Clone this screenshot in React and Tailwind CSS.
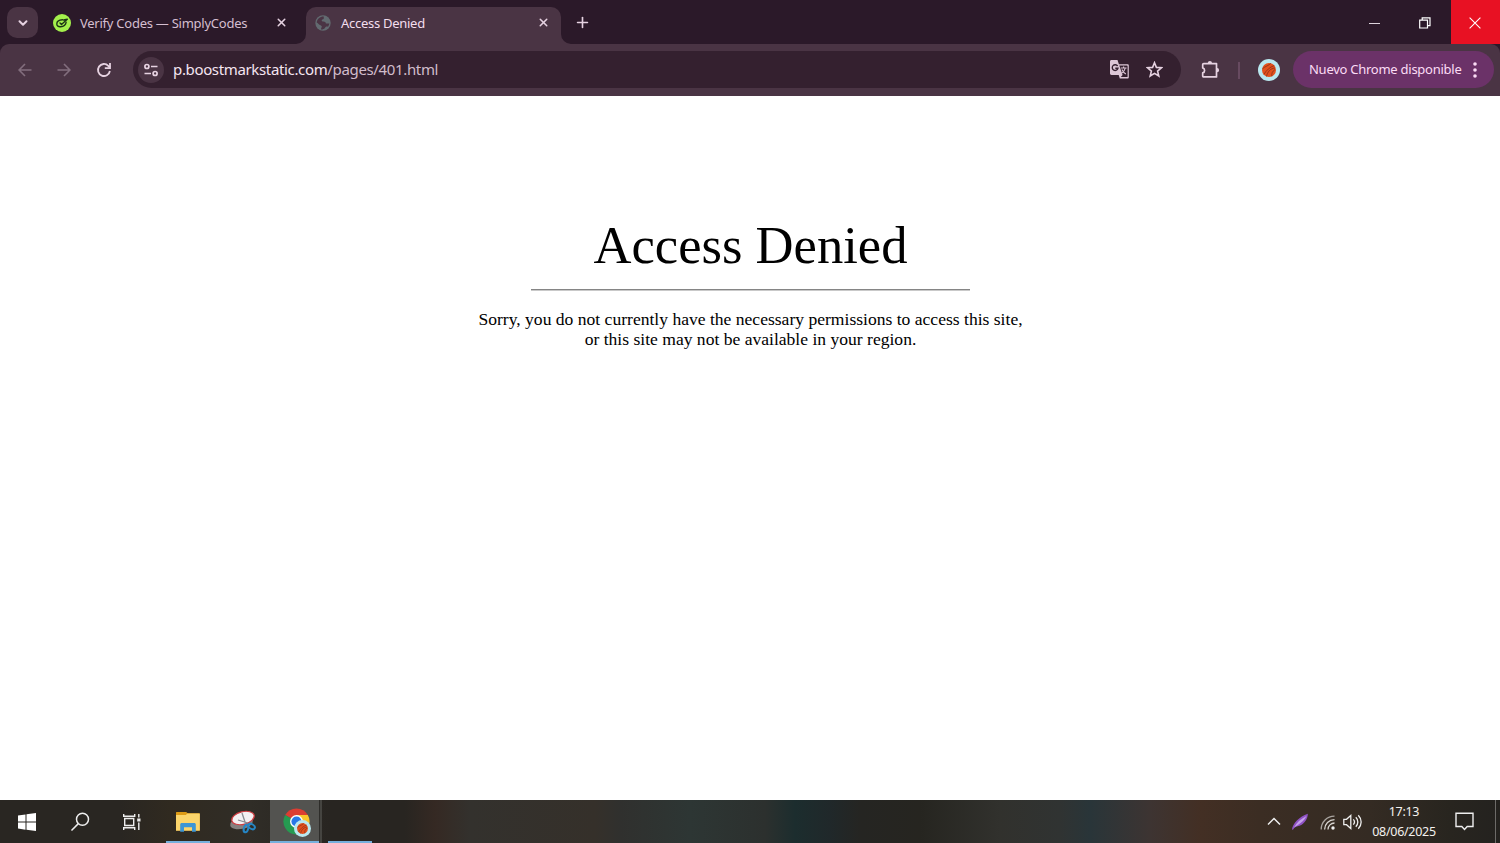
import { ChevronDown, Plus, X } from "lucide-react";

const SimplyCodesIcon = () => (
  <svg width="18" height="18" viewBox="0 0 18 18" className="shrink-0">
    <circle cx="9" cy="9" r="9" fill="#a4f04c" />
    <g fill="none" stroke="#1d3515" strokeWidth="1.4" strokeLinecap="round" strokeLinejoin="round">
      <path d="M9.500 5.800C6.200 6 3.800 7.600 3.800 9.900c0 2 1.600 3 3.700 2.800 3-.3 5.200-2 5.600-4.400" />
      <path d="m7 9 1.500 1.500 5.800-5.200-3.600.7" />
    </g>
  </svg>
);

const GlobeIcon = () => (
  <svg width="16" height="16" viewBox="0 0 16 16" className="shrink-0">
    <circle cx="8" cy="8" r="7.7" fill="#626a70" />
    <path
      d="M8.800 1.500c-.2 1.200.4 1.700-.3 2.400-.6.600-1.600.4-1.800 1.400-.1.800.6 1.200 1.700 1.300 1.500.1 2.300.6 2.500 1.900h3.400c-.2 1.400-.6 2.500-1.300 3.300-.8-.4-1.700-.4-2.400.2-.7.500-.6 1.300-1.400 1.700-.6.300-1.300.3-1.600.900l-1.500-.2c-.2-1.200.6-1.700.7-2.600 0-1-1-1.200-1.900-1.700C3.700 9.400 3.600 8.200 1.700 7.400 2.100 3.900 5 1.400 8.800 1.500Z"
      fill="#4a3444"
    />
  </svg>
);

const Basketball = ({ size }) => (
  <svg width={size} height={size} viewBox="0 0 22 22" className="shrink-0">
    <circle cx="11" cy="11" r="11" fill="#b9e8ef" />
    <circle cx="11" cy="11" r="7" fill="#e2501c" />
    <g fill="none" stroke="#7a2c18" strokeWidth="0.7">
      <path d="M5.800 15.500C8.500 11 12 8 16.300 6.500M8.500 17.500c1-4.500 3.500-8 8.500-8.500M4.300 9.800c3-2.500 7-3.500 8.500-5.500M13.800 17.300c-.3-3 .5-5 3.200-6.800" />
    </g>
  </svg>
);

const Tab = ({ icon, title, active }) => (
  <div className="flex h-[31px] flex-1 items-center">
    {icon}
    <span
      className={
        active
          ? "ml-[10px] flex-1 whitespace-nowrap pt-[2px] text-[13px] tracking-[-0.28px] text-[#f3deee]"
          : "ml-[9px] flex-1 whitespace-nowrap pt-[2px] text-[13px] tracking-[-0.25px] text-[#d5bfd0]"
      }
    >
      {title}
    </span>
    <X size={13} strokeWidth={2.8} className="shrink-0 text-[#e6d2e1]" />
  </div>
);

const TabStrip = () => (
  <div className="flex h-11 bg-[#2b1929] text-[#e6d2e1]">
    <div className="ml-[7px] mt-[7px] flex h-[31px] w-[31px] items-center justify-center rounded-[10px] bg-[#4a3444]">
      <ChevronDown size={14} strokeWidth={3.4} />
    </div>
    <div className="ml-[15px] mt-[7px] flex w-[235px]">
      <Tab icon={<SimplyCodesIcon />} title="Verify Codes — SimplyCodes" />
    </div>
    <svg width="10" height="10" viewBox="0 0 10 10" className="ml-2 self-end">
      <path d="M10 0v10H0A10 10 0 0 0 10 0Z" fill="#4a3444" />
    </svg>
    <div className="mt-[7px] flex w-[255px] rounded-t-[10px] bg-[#4a3444] pl-[9px] pr-[11px]">
      <Tab active icon={<GlobeIcon />} title="Access Denied" />
    </div>
    <svg width="10" height="10" viewBox="0 0 10 10" className="self-end">
      <path d="M0 0v10h10A10 10 0 0 1 0 0Z" fill="#4a3444" />
    </svg>
    <Plus size={17} strokeWidth={2.3} className="ml-[3px] mt-[14px]" />
    <div className="ml-auto flex">
      <div className="flex w-[50px] items-center justify-center">
        <div className="mt-[2px] ml-px h-px w-[11px] bg-[#ddd3dc]" />
      </div>
      <div className="flex w-[52px] items-center justify-center">
        <svg width="12" height="12" viewBox="0 0 12 12" fill="none" stroke="#fff" strokeWidth="1.2" className="mt-px mr-[1px]">
          <path d="M.7 3.200h7.800v7.800H.7ZM3.200 3V.8h7.800v7.800H8.700" />
        </svg>
      </div>
      <div className="flex w-[49px] items-center justify-center bg-[#e81123]">
        <svg width="12" height="12" viewBox="0 0 12 12" stroke="#fff" strokeWidth="1.1" className="mr-px mt-px">
          <path d="m.6.6 10.800 10.800M11.400.6.600 11.400" />
        </svg>
      </div>
    </div>
  </div>
);

const ArrowIcon = ({ className }) => (
  <svg width="14" height="14" viewBox="0 0 14 14" fill="none" stroke="#826e7d" strokeWidth="1.6" className={className}>
    <path d="M13.500 7H1.300M7 1 1.100 7 7 13" />
  </svg>
);

const Toolbar = () => (
  <div className="bg-[#2b1929]">
    <div className="flex h-[52px] items-center rounded-t-[9px] bg-[#4a3444]">
      <ArrowIcon className="ml-[18px]" />
      <ArrowIcon className="ml-[25px] rotate-180" />
      <svg width="16" height="16" viewBox="0 0 16 16" fill="none" stroke="#e6d2e1" strokeWidth="1.800" className="ml-[25px]">
        <path d="M13.900 9A6 6 0 1 1 12.300 3.800L14 5.500" />
        <path d="M14 .9v5.200H8.800" />
      </svg>
      <div className="-mt-px ml-[21px] flex h-[37px] w-[1048px] items-center rounded-full bg-[#34202f] pl-[5px]">
        <div className="flex h-[26px] w-[26px] items-center justify-center rounded-full bg-[#4a3444]">
          <svg width="14" height="14" viewBox="0 0 14 14" fill="none" stroke="#e6d2e1" strokeWidth="1.700">
            <circle cx="2.900" cy="3.500" r="2" />
            <circle cx="11.100" cy="10.500" r="2" />
            <path d="M7 3.500h6.500M.5 10.500H7" />
          </svg>
        </div>
        <div className="ml-[9px] flex-1 whitespace-nowrap text-[15px] tracking-[-0.35px] text-[#d1bccb]">
          <span className="text-[#f5e5f1]">p.boostmarkstatic.com</span>/pages/401.html
        </div>
        <svg width="19" height="19" viewBox="0 0 19 19" className="mr-[17px]">
          <path d="M1.500 0h6l1.400 4.200h8.600c.8 0 1.300.5 1.300 1.300v11.700c0 .8-.5 1.300-1.300 1.300H9.800L8.700 15H1.500C.6 15 0 14.400 0 13.600V1.500C0 .6.600 0 1.500 0Z" fill="#dcc6d6" />
          <path d="M9.300 5.500h7.700c.4 0 .6.2.6.600v10.300c0 .4-.2.700-.6.700h-6.200l1.800-2.200Z" fill="#34202f" />
          <path d="M7.600 6A2.900 2.900 0 1 0 8 8.200H5.300" fill="none" stroke="#34202f" strokeWidth="1.400" />
          <path d="M10.800 8h5.800M13.600 6.600V8M15.300 8c-.5 2.500-2 4.200-3.700 5.300M11.900 9.500c.7 1.500 2.300 3.500 4 4.400" fill="none" stroke="#dcc6d6" strokeWidth="1.100" />
        </svg>
        <svg width="17" height="17" viewBox="0 0 17 17" fill="none" stroke="#e6d2e1" strokeWidth="1.600" className="mr-[18px]">
          <path d="m8.500 1.700 1.900 4.700 5.100.4-3.900 3.300 1.200 4.900-4.300-2.600L4.200 15l1.200-4.900-3.900-3.300 5.100-.4Z" />
        </svg>
      </div>
      <svg width="20" height="20" viewBox="0 0 20 20" className="-mt-px ml-5">
        <path d="M2.700 3.600h12.800v13.300H2.700c-.6 0-1-.4-1-1v-3a2.600 2.600 0 0 0 0-5V4.600c0-.6.400-1 1-1Z" fill="none" stroke="#e6d2e1" strokeWidth="1.700" strokeLinejoin="round" />
        <path d="M6.800 3a2.100 2.100 0 0 1 4.200 0ZM16 8.100a2.100 2.100 0 0 1 0 4.200Z" fill="#e6d2e1" />
      </svg>
      <div className="ml-[17px] mr-[18px] h-[17px] w-[2px] bg-[#674a60]" />
      <Basketball size={22} />
      <div className="-mt-px ml-[13px] flex h-[37px] w-[201px] items-center rounded-full bg-[#6b3268] pl-4">
        <span className="whitespace-nowrap text-[13px] tracking-[-0.26px] text-[#fbdcf5]">Nuevo Chrome disponible</span>
        <svg width="4" height="16" viewBox="0 0 4 16" fill="#fbdcf5" className="ml-auto mr-[17px]">
          <circle cx="2" cy="2" r="1.800" />
          <circle cx="2" cy="8" r="1.800" />
          <circle cx="2" cy="14" r="1.800" />
        </svg>
      </div>
    </div>
  </div>
);

const Page = () => (
  <main className="flex h-[704px] flex-col items-center bg-white pt-[119px] text-center font-['Liberation_Serif',serif] text-black">
    <h1 className="h-[60px] whitespace-nowrap pl-px text-[52.600px] leading-[60px]">Access Denied</h1>
    <div className="mt-[14px] h-[2px] w-[439px] border-t border-t-[#858585] bg-[#c9c9c9]" />
    <p className="mt-[18px] whitespace-nowrap pl-px text-[17.570px] leading-5">
      Sorry, you do not currently have the necessary permissions to access this site,
      <br />
      or this site may not be available in your region.
    </p>
  </main>
);

const Taskbar = () => (
  <footer className="flex h-[43px] bg-[linear-gradient(90deg,#292622_0px,#292622_120px,#302a20_170px,#302d27_250px,#282521_330px,#282521_405px,#352923_435px,#33312d_470px,#35302a_595px,#30302e_620px,#2d3634_690px,#2c302e_765px,#1c2d2e_795px,#20282a_830px,#252522_860px,#262520_920px,#31312d_1000px,#303332_1060px,#293539_1090px,#3d3432_1150px,#432f24_1200px,#3b2d23_1260px,#342b23_1370px,#28251f_1450px,#24221f_1500px)]">
    <div className="flex w-[53px] items-center justify-center">
      <svg width="18" height="18" viewBox="0 0 18 18" fill="#fff">
        <path d="M0 2.500 7.500 1.400v7.200H0ZM8.500 1.300 18 0v8.600H8.500ZM0 9.500h7.500v7.200L0 15.600ZM8.500 9.500H18V18l-9.500-1.300Z" />
      </svg>
    </div>
    <div className="flex w-[53px] items-center justify-center">
      <svg width="20" height="20" viewBox="0 0 20 20" fill="none" stroke="#eee" strokeWidth="1.500">
        <circle cx="12.500" cy="7.300" r="6" />
        <path d="M8.300 11.600 1.500 18.500" />
      </svg>
    </div>
    <div className="flex w-[52px] items-center justify-center">
      <svg width="18" height="18" viewBox="0 0 18 18" fill="none" stroke="#eee" strokeWidth="1.400">
        <path d="M.7 1v2.200h11V1M1.700 5.500h9v7h-9ZM.7 17v-2.200h11V17M15.800 1v3.500M15.800 9.500V17" />
        <path d="M14.200 5.500h3.300v3h-3.300Z" fill="#eee" stroke="none" />
      </svg>
    </div>
    <div className="flex w-[60px] flex-col items-center">
      <svg width="24" height="21" viewBox="0 0 24 21" className="mt-3 shrink-0">
        <path d="M0 .6C0 .2.300 0 .6 0h9.600l1.500 1.200H23c.5 0 .8.300.8.700v16.300H0Z" fill="#dd9b16" />
        <path d="M0 3.100h9.800l1.600-1.500h12.400v17.100H0Z" fill="#fbd56b" />
        <path d="M4.200 19.800v-7.200c0-.9.600-1.500 1.500-1.500h12.600c.9 0 1.500.600 1.500 1.500v7.200H16v-4.600H8v4.600Z" fill="#3d96d4" />
      </svg>
      <div className="-ml-px mt-auto h-[2px] w-[44px] shrink-0 bg-[#76b0dd]" />
    </div>
    <div className="flex w-[52px] items-center justify-center">
      <svg width="28" height="26" viewBox="0 0 28 26" className="ml-[-3px]">
        <ellipse cx="12.500" cy="14" rx="11.500" ry="6" fill="#85807f" transform="rotate(-12 12.500 14)" />
        <ellipse cx="14" cy="9" rx="11.500" ry="6.300" fill="#f3f0f2" stroke="#cf3d42" strokeWidth="1.200" transform="rotate(-14 14 9)" />
        <path d="m13 4 4 12M9 11l10 3" stroke="#8a8c92" strokeWidth="1.300" />
        <g fill="none" stroke="#2585c4" strokeWidth="2">
          <ellipse cx="17" cy="19.500" rx="2.200" ry="3.900" transform="rotate(15 17 19.500)" />
          <ellipse cx="22.500" cy="17.500" rx="3.600" ry="2.300" transform="rotate(30 22.500 17.500)" />
        </g>
      </svg>
    </div>
    <div className="flex w-[49px] flex-col items-center bg-[#535350]">
      <div className="relative mt-[8px] ml-[3px] h-[27px] w-[27px] shrink-0">
        <svg width="27" height="27" viewBox="0 0 27 27">
          <path d="M13.500 13.500 2.200 7a13 13 0 0 1 22.600 0Z" fill="#dc3d32" />
          <path d="M13.500 13.500 2.200 7a13 13 0 0 0 11.300 19.500l5.600-9.700Z" fill="#269a51" />
          <path d="M13.500 7h11.300a13 13 0 0 1-11.300 19.500l5.600-9.700Z" fill="#f9c52a" />
          <circle cx="13.500" cy="13.500" r="6.500" fill="#fff" />
          <circle cx="13.500" cy="13.500" r="5.100" fill="#2878e7" />
        </svg>
        <div className="absolute left-[11px] top-[12px]">
          <Basketball size={17} />
        </div>
      </div>
      <div className="mt-auto h-[2px] w-full shrink-0 bg-[#76b0dd]" />
    </div>
    <div className="w-[3px] border-l border-l-[#2e2d2a] bg-[#454440]" />
    <div className="ml-[6px] h-[2px] w-[44px] self-end bg-[#76b0dd]" />

    <div className="ml-auto flex items-center">
      <svg width="14" height="9" viewBox="0 0 14 9" fill="none" stroke="#eee" strokeWidth="1.500" className="mr-[10px]">
        <path d="m1 7.500 6-6 6 6" />
      </svg>
      <svg width="18" height="18" viewBox="0 0 18 18" className="mr-[11px]">
        <path d="M16.800.8c.2 4.200-3.200 10.200-8.300 12-2.500.9-4.600.8-6.300 3.800l-1.200.2C1.200 11 8.500 3.500 16.800.8Z" fill="#8f52c4" />
        <path d="M15.500 3C12.500 8.500 8.500 11.200 3 14.500 5.500 9.800 9.500 6 15.500 3Z" fill="#c5a1ec" />
      </svg>
      <svg width="16" height="16" viewBox="0 0 16 16" fill="none" stroke="#d8d5d1" strokeWidth="1.300" className="mr-[7px] mt-[3px]">
        <path d="M1.200 14.500C1.200 7 7 1.200 14.500 1.200" stroke="#aaa5a0" />
        <path d="M4.600 14.500c0-5.500 4.400-9.900 9.900-9.900M8 14.500C8 10.900 10.900 8 14.500 8" />
        <circle cx="13" cy="13" r="1.700" fill="#eee" stroke="none" />
      </svg>
      <svg width="19" height="18" viewBox="0 0 19 18" fill="none" stroke="#eee" strokeWidth="1.300">
        <path d="M.8 6.300h2.700L7.800 2.500v13L3.500 11.700H.8ZM10.300 6.400c1.500 1.600 1.500 3.600 0 5.200M12.800 4.300c2.700 2.700 2.700 6.700 0 9.400M15.300 2.200c3.800 4 3.800 9.600 0 13.600" />
      </svg>
      <div className="ml-[10px] flex h-[43px] w-[64px] flex-col items-center whitespace-nowrap pt-[2px] text-[12.500px] leading-5 tracking-[-0.3px] text-[#f3f1ee]">
        <span>17:13</span>
        <span>08/06/2025</span>
      </div>
      <svg width="19" height="19" viewBox="0 0 19 19" fill="none" stroke="#eee" strokeWidth="1.400" className="ml-[19px] mr-[21px]">
        <path d="M1 1.200h17v13.300h-5.800l-2.700 3-2.700-3H1Z" />
      </svg>
      <div className="mr-1 h-[43px] w-px bg-[#6d6b68]" />
    </div>
  </footer>
);

export default function App() {
  return (
    <div className="h-[843px] w-[1500px] overflow-hidden font-['Noto_Sans',sans-serif]">
      <TabStrip />
      <Toolbar />
      <Page />
      <Taskbar />
    </div>
  );
}
